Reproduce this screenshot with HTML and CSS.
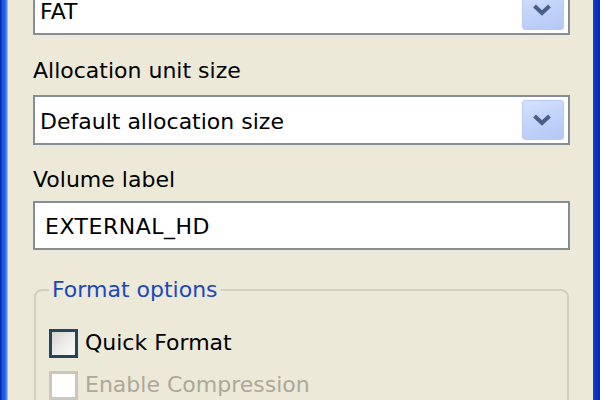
FILE: index.html
```html
<!DOCTYPE html>
<html>
<head>
<meta charset="utf-8">
<link rel="stylesheet" href="styles.css">
</head>
<body>
<div class="window">
  <div class="edge edge-left"></div>
  <div class="content">
    <div class="combo combo-first">
      <span class="value">FAT</span>
      <span class="btn"><svg width="20" height="12" viewBox="0 0 20 12"><polyline points="2.5,2 10,9 17.5,2" fill="none" stroke="#4a5e86" stroke-width="4"/></svg></span>
    </div>
    <div class="label label-alloc">Allocation unit size</div>
    <div class="combo">
      <span class="value">Default allocation size</span>
      <span class="btn"><svg width="20" height="12" viewBox="0 0 20 12"><polyline points="2.5,2 10,9 17.5,2" fill="none" stroke="#4a5e86" stroke-width="4"/></svg></span>
    </div>
    <div class="label label-volume">Volume label</div>
    <div class="field"><span class="caps">EXTERNAL_HD</span></div>
    <fieldset class="group">
      <legend>Format options</legend>
      <div class="check"><span class="box"></span><span>Quick Format</span></div>
      <div class="check check-disabled"><span class="box"></span><span>Enable Compression</span></div>
    </fieldset>
  </div>
  <div class="edge edge-right"></div>
</div>
</body>
</html>
```
FILE: styles.css
```css
html, body {
  margin: 0;
  padding: 0;
  width: 600px;
  height: 400px;
  overflow: hidden;
  background: #ece9d8;
}
.window {
  display: flex;
  width: 600px;
  height: 400px;
  overflow: hidden;
  font-family: "DejaVu Sans", Verdana, sans-serif;
  font-size: 22px;
  line-height: 26px;
  color: #000;
}
.edge {
  flex: none;
  height: 400px;
}
.edge-left {
  width: 8px;
  background: linear-gradient(to right, #0a2aa8 0, #0a2aa8 1px, #1258e6 2px, #1d62ea 5px, #6f95e6 7px, #c9d3e8 8px);
}
.edge-right {
  width: 7px;
  background: linear-gradient(to right, #1447d8 0, #0b35c4 2px, #0a2ba4 7px);
}
.content {
  flex: none;
  width: 585px;
  height: 400px;
  overflow: hidden;
  padding-left: 25px;
  box-sizing: border-box;
}
.combo, .field {
  width: 537px;
  height: 50px;
  box-sizing: border-box;
  border: 2px solid #858d95;
  background: #fff;
  display: flex;
  align-items: center;
}
.combo-first {
  margin-top: -15px;
}
.value {
  flex: 1;
  padding-left: 5px;
  padding-top: 3px;
}
.btn {
  flex: none;
  width: 42px;
  height: 40px;
  margin-right: 4px;
  box-sizing: border-box;
  border: 1px solid #b7cbf6;
  border-radius: 3px;
  background: linear-gradient(160deg, #d6e2fd 0%, #c3d4fb 45%, #b4c7f5 100%);
  display: flex;
  align-items: center;
  justify-content: center;
}
.btn svg {
  display: block;
  margin-left: -2px;
}
.label-alloc {
  margin-top: 23px;
  margin-bottom: 11px;
}
.label-volume {
  margin-top: 22px;
  margin-bottom: 8px;
}
.field {
  height: 49px;
  padding-left: 10px;
  padding-top: 3px;
}
.caps {
  letter-spacing: 0.5px;
}
.group {
  margin: 27px 0 0 1px;
  width: 535px;
  box-sizing: border-box;
  border: 2px solid #d0d0bf;
  border-radius: 8px;
  padding: 25px 13px 0 13px;
  height: 160px;
}
.group legend {
  color: #1c48b8;
  padding: 0 3px;
}
.check {
  display: flex;
  align-items: center;
  height: 30px;
  gap: 7px;
  margin-bottom: 12px;
}
.box {
  flex: none;
  width: 29px;
  height: 29px;
  box-sizing: border-box;
  border: 3px solid #25455e;
  background: linear-gradient(135deg, #d5d5ce 0%, #ececea 55%, #fbfbfa 100%);
}
.check-disabled {
  color: #aca899;
}
.check-disabled .box {
  border-color: #cbc8bb;
  background: #fff;
}
```
